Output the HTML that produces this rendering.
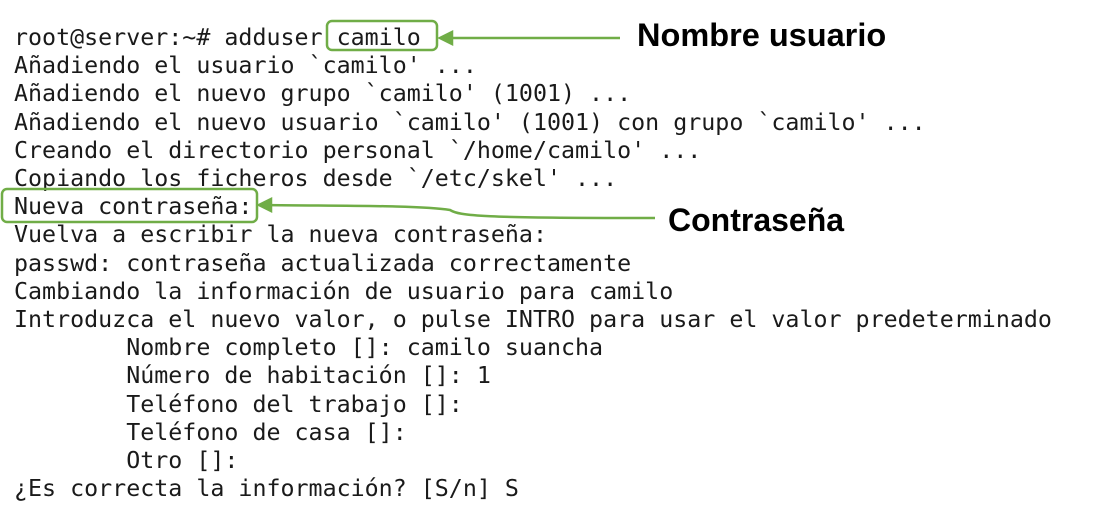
<!DOCTYPE html>
<html><head><meta charset="utf-8"><style>
body{margin:0;width:1107px;height:509px;background:#fff;overflow:hidden;position:relative}
pre{position:absolute;left:14px;top:24px;margin:0;font-family:"DejaVu Sans Mono","Liberation Mono",monospace;font-size:23.3px;line-height:28.2px;color:#1a1a1a}
.lbl{position:absolute;font-family:"Liberation Sans",sans-serif;font-weight:bold;color:#000;white-space:nowrap}
svg{position:absolute;left:0;top:0}
</style></head><body>
<pre>root@server:~# adduser camilo
Añadiendo el usuario `camilo' ...
Añadiendo el nuevo grupo `camilo' (1001) ...
Añadiendo el nuevo usuario `camilo' (1001) con grupo `camilo' ...
Creando el directorio personal `/home/camilo' ...
Copiando los ficheros desde `/etc/skel' ...
Nueva contraseña:
Vuelva a escribir la nueva contraseña:
passwd: contraseña actualizada correctamente
Cambiando la información de usuario para camilo
Introduzca el nuevo valor, o pulse INTRO para usar el valor predeterminado
        Nombre completo []: camilo suancha
        Número de habitación []: 1
        Teléfono del trabajo []:
        Teléfono de casa []:
        Otro []:
¿Es correcta la información? [S/n] S</pre>
<svg width="1107" height="509" fill="none" stroke="#70ad47" stroke-width="2.5">
<rect x="327" y="21" width="110" height="29" rx="5"/>
<rect x="2" y="189" width="255" height="33" rx="5"/>
<path d="M446 38 L620 38"/>
<path d="M440 38 L452 32 L452 44 Z" fill="#70ad47"/>
<path d="M266 205 C330 206 420 205 450 210 C460 216 480 218 655 218"/>
<path d="M259 205 L271 199 L271 211 Z" fill="#70ad47"/>
</svg>
<div class="lbl" style="left:637px;top:17px;font-size:32.5px">Nombre usuario</div>
<div class="lbl" style="left:668px;top:202px;font-size:32px">Contraseña</div>
</body></html>
